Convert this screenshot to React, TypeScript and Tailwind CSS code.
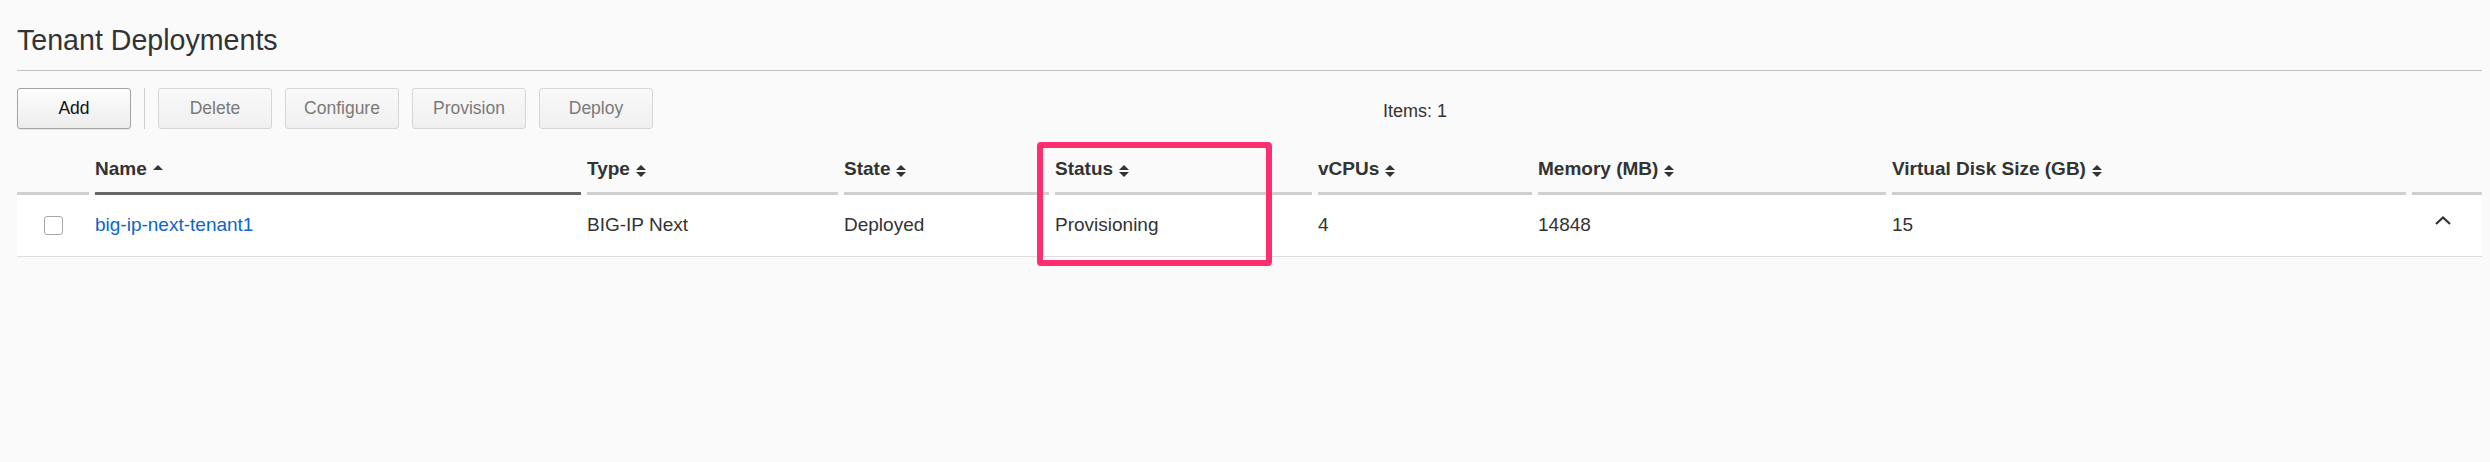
import React from "react";

const cols = [
  { w: "w-[78px]", label: "" },
  { w: "w-[492px]", label: "Name" },
  { w: "w-[257px]", label: "Type" },
  { w: "w-[211px]", label: "State" },
  { w: "w-[263px]", label: "Status" },
  { w: "w-[220px]", label: "vCPUs" },
  { w: "w-[354px]", label: "Memory (MB)" },
  { w: "w-[520px]", label: "Virtual Disk Size (GB)" },
  { w: "w-[70px]", label: "" },
];

function SortIcon({ upOnly }: { upOnly?: boolean }) {
  return (
    <svg width="10" height="12" viewBox="0 0 10 12" className="ml-[6px] mt-[4px] shrink-0" fill="#333">
      <path d="M0 5 L5 0 L10 5 Z" />
      {!upOnly && <path d="M0 7 L10 7 L5 12 Z" />}
    </svg>
  );
}

function Btn({ label, primary }: { label: string; primary?: boolean }) {
  return (
    <button
      className={
        primary
          ? "w-[114px] h-[41px] rounded-[3px] border border-[#a3a3a3] bg-gradient-to-b from-[#fdfdfd] to-[#ececec] text-[17.5px] text-[#111] shadow-[0_1px_1px_rgba(0,0,0,0.08)]"
          : "w-[114px] h-[41px] rounded-[3px] border border-[#d6d6d6] bg-gradient-to-b from-[#f9f9f9] to-[#f0f0f0] text-[17.5px] text-[#7a7a7a]"
      }
    >
      {label}
    </button>
  );
}

export default function App() {
  return (
    <div
      className="relative h-[462px] w-[2490px] bg-[#fafafa] pl-[17px] pr-[8px] text-[#333]"
      style={{ fontFamily: '"Liberation Sans", Arial, Helvetica, sans-serif' }}
    >
      <h1 className="pt-[24px] text-[28.6px] leading-[32px] font-normal text-[#333]">Tenant Deployments</h1>
      <div className="mt-[14px] h-px bg-[#c2c2c2]" />

      <div className="mt-[17px] flex items-center gap-[13px]">
        <Btn label="Add" primary />
        <div className="h-[41px] w-px bg-[#cfcfcf]" />
        <Btn label="Delete" />
        <Btn label="Configure" />
        <Btn label="Provision" />
        <Btn label="Deploy" />
        <span className="ml-[717px] mt-[5px] text-[18px] text-[#333]">Items: 1</span>
      </div>

      <div className="mt-[29px]">
        <div className="flex">
          {cols.map((c, i) => (
            <div key={i} className={`${c.w} ${i === cols.length - 1 ? "" : "pr-[6px]"} flex flex-col`}>
              <div className="flex h-[22px] items-center pl-0 text-[19px] font-bold leading-[22px] text-[#333] whitespace-nowrap">
                {c.label}
                {c.label === "Name" && <SortIcon upOnly />}
                {c.label && c.label !== "Name" && <SortIcon />}
              </div>
              <div className={`mt-[12px] h-[3px] ${i === 1 ? "bg-[#666]" : "bg-[#d0d0d0]"}`} />
            </div>
          ))}
        </div>

        <div className="flex h-[62px] items-center border-b border-[#dedede] bg-white text-[19px] text-[#333]">
          <div className="w-[78px] pr-[6px] flex justify-center">
            <div className="h-[19px] w-[19px] rounded-[3px] border border-[#a8a8a8] bg-white" />
          </div>
          <div className="w-[492px] pr-[6px]">
            <a className="text-[#0a66cc]">big-ip-next-tenant1</a>
          </div>
          <div className="w-[257px] pr-[6px]">BIG-IP Next</div>
          <div className="w-[211px] pr-[6px]">Deployed</div>
          <div className="w-[263px] pr-[6px]">Provisioning</div>
          <div className="w-[220px] pr-[6px]">4</div>
          <div className="w-[354px] pr-[6px]">14848</div>
          <div className="w-[520px] pr-[6px]">15</div>
          <div className="w-[70px] flex justify-center pr-[8px] mb-[10px]">
            <svg width="16" height="9" viewBox="0 0 16 9" fill="none" stroke="#333" strokeWidth="2.2">
              <path d="M1 8 L8 1.5 L15 8" />
            </svg>
          </div>
        </div>
      </div>

      <div className="absolute left-[1037px] top-[142px] h-[124px] w-[235px] rounded-[4px] border-[6px] border-[#ff2e6e]" />
    </div>
  );
}
